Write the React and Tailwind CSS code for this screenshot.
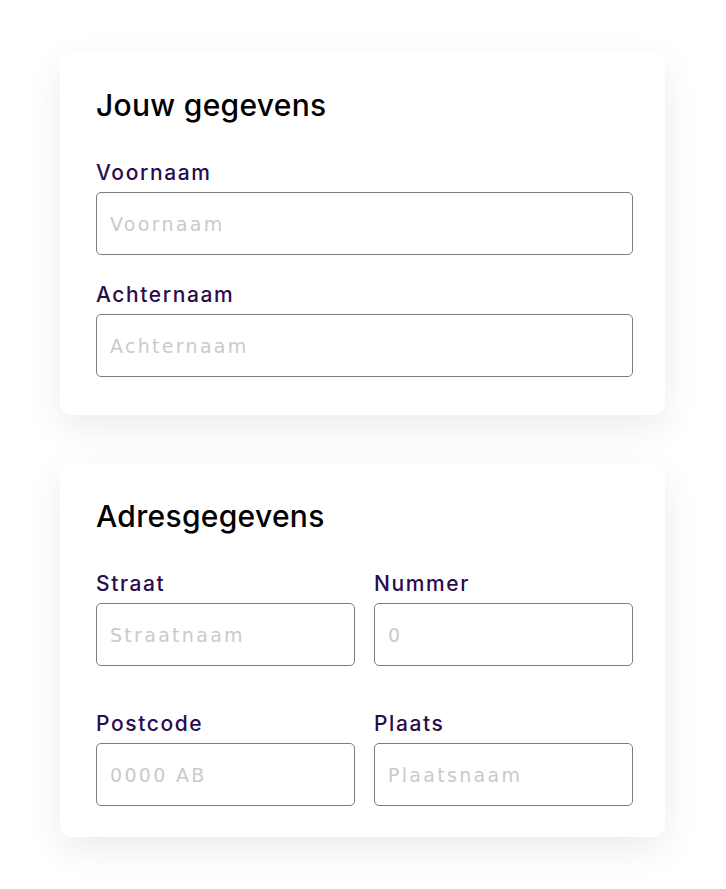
const font = { fontFamily: "Inter, 'Noto Sans', sans-serif" };

const Field = ({ label, placeholder }) => (
    <div className="flex flex-col">
        <label className="text-[21px] leading-[24px] font-medium text-[#2a0b4d] tracking-[1.6px]">{label}</label>
        <input
            placeholder={placeholder}
            style={{ fontFamily: "'DejaVu Sans', sans-serif" }}
            className="mt-[7px] h-[63px] w-full rounded-[5px] border border-[#7d7d7d] bg-white px-[13px] text-[19px] tracking-[2.3px] text-gray-800 outline-none placeholder:text-[#cacaca]"
        />
    </div>
);

const Card = ({ title, children, className }) => (
    <div className={`w-[605px] rounded-[12px] bg-white pl-[36px] pr-[32px] pt-[35px] shadow-[0_12px_36px_rgba(0,0,0,0.08)] ${className}`}>
        <h2 className="text-[30px] leading-[36px] font-medium text-black tracking-[0.3px] mb-[38px]">{title}</h2>
        {children}
    </div>
);

export default function App() {
    return (
        <div className="min-h-screen w-[726px] bg-white pt-[52px] pl-[60px]" style={font}>
            {/* persoonsgegevens */}
            <Card title="Jouw gegevens" className="pb-[38px]">
                <div className="flex flex-col gap-[28px]">
                    <Field label="Voornaam" placeholder="Voornaam" />
                    <Field label="Achternaam" placeholder="Achternaam" />
                </div>
            </Card>

            {/* adres */}
            <Card title="Adresgegevens" className="mt-[48px] pb-[31px]">
                <div className="grid grid-cols-2 gap-x-[19px] gap-y-[46px]">
                    <Field label="Straat" placeholder="Straatnaam" />
                    <Field label="Nummer" placeholder="0" />
                    <Field label="Postcode" placeholder="0000 AB" />
                    <Field label="Plaats" placeholder="Plaatsnaam" />
                </div>
            </Card>
        </div>
    );
}
